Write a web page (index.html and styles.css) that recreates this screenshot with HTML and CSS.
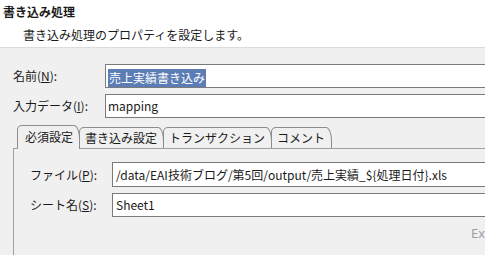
FILE: index.html
```html
<!DOCTYPE html>
<html lang="ja">
<head>
<meta charset="utf-8">
<link rel="stylesheet" href="styles.css">
</head>
<body>
<div class="page">
  <div class="header">
    <div class="title">書き込み処理</div>
    <div class="subtitle">書き込み処理のプロパティを設定します。</div>
  </div>
  <div class="form">
    <div class="row">
      <label class="label">名前(<u>N</u>):</label>
      <div class="input"><span class="sel">売上実績書き込み</span></div>
    </div>
    <div class="row">
      <label class="label">入力データ(<u>I</u>):</label>
      <div class="input">mapping</div>
    </div>
    <div class="tabs">
      <div class="tab active">必須設定</div>
      <div class="tab">書き込み設定</div>
      <div class="tab">トランザクション</div>
      <div class="tab">コメント</div>
    </div>
    <div class="panel">
      <div class="prow">
        <label class="plabel">ファイル(<u>P</u>):</label>
        <div class="input pinput tall">/data/EAI技術ブログ/第5回/output/売上実績_${処理日付}.xls</div>
      </div>
      <div class="prow">
        <label class="plabel">シート名(<u>S</u>):</label>
        <div class="input pinput">Sheet1</div>
      </div>
      <div class="hint">Ex</div>
    </div>
  </div>
</div>
</body>
</html>
```
FILE: styles.css
```css
html, body {
  margin: 0;
  padding: 0;
}
body {
  width: 485px;
  height: 255px;
  overflow: hidden;
  background: #f0f0f0;
  font-family: "Noto Sans CJK JP", "Noto Sans", sans-serif;
  font-size: 12px;
  color: #1a1a1a;
}
.page {
  width: 485px;
  height: 255px;
  overflow: hidden;
}
.header {
  background: #ffffff;
  border-bottom: 1px solid #dcdcdc;
  padding: 4px 0 0 3px;
  box-sizing: border-box;
  height: 48px;
}
.title {
  font-weight: bold;
  line-height: 16px;
}
.subtitle {
  margin-top: 7px;
  padding-left: 20px;
  line-height: 16px;
}
.form {
  padding: 16px 0 0 13px;
}
.row {
  display: flex;
  align-items: center;
  margin-bottom: 6px;
}
.label {
  flex: none;
  width: 92px;
  line-height: 16px;
}
.input {
  flex: none;
  box-sizing: border-box;
  height: 24px;
  width: 520px;
  background: #ffffff;
  border: 1px solid #7a7a7a;
  padding-left: 2px;
  line-height: 22px;
  white-space: nowrap;
}
.sel {
  display: inline-block;
  background: #5b7cb4;
  color: #ffffff;
  line-height: 18px;
  padding: 0 1px;
  vertical-align: middle;
}
.tabs {
  display: flex;
  align-items: flex-end;
  margin-top: 7px;
  padding-left: 4px;
  height: 23px;
  position: relative;
  z-index: 1;
}
.tab {
  box-sizing: border-box;
  height: 21px;
  border: 1px solid #8c8c8c;
  border-bottom: none;
  border-radius: 5px 6px 0 0 / 5px 14px 0 0;
  padding: 0 6px 0 5px;
  line-height: 20px;
  margin-right: -1px;
  background: #f0f0f0;
}
.tab.active {
  height: 24px;
  margin-bottom: -1px;
  padding: 1px 6px 0 7px;
  line-height: 20px;
}
.panel {
  box-sizing: border-box;
  border-top: 1px solid #a0a0a0;
  border-left: 1px solid #a0a0a0;
  height: 107px;
  padding: 13px 0 0 16px;
}
.prow {
  display: flex;
  align-items: center;
  margin-bottom: 6px;
}
.plabel {
  flex: none;
  width: 82px;
  line-height: 16px;
}
.pinput {
  padding-left: 3px;
}
.pinput.tall {
  height: 25px;
  line-height: 23px;
}
.hint {
  margin-top: 8px;
  padding-left: 441px;
  color: #a39bab;
  font-family: "Noto Sans", sans-serif;
  font-size: 13px;
  line-height: 16px;
}
```
